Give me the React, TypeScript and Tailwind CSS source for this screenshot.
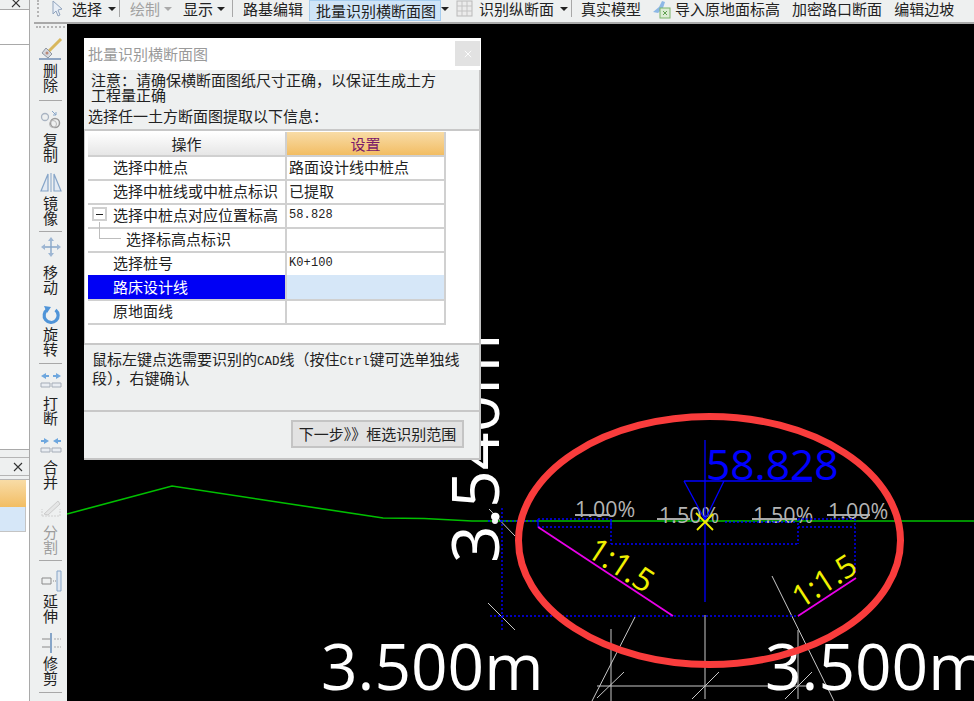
import type { ReactNode } from "react";

const FONT = "font-['Noto_Sans_CJK_SC','Liberation_Sans',sans-serif]";
const MONO = "font-['Liberation_Mono',monospace]";

function Caret({ className = "", gray = false }: { className?: string; gray?: boolean }) {
  return (
    <span
      className={`h-0 w-0 border-x-4 border-t-4 border-x-transparent ${gray ? "border-t-[#aaaaaa]" : "border-t-[#222222]"} ${className}`}
    />
  );
}

function Sep({ className = "" }: { className?: string }) {
  return <span className={`h-[17px] w-px bg-[#a8a8a8] ${className}`} />;
}

function CloseGlyph({ className = "" }: { className?: string }) {
  return (
    <svg viewBox="0 0 10 10" className={className} fill="none" stroke="currentColor" strokeWidth="1.1">
      <path d="M1 1l8 8M9 1l-8 8" />
    </svg>
  );
}

function TopToolbar() {
  return (
    <div className="flex h-6 shrink-0 items-start border-b-2 border-[#a9a9a9] bg-[#eef0f0] text-[15px] leading-[17px] text-[#222222]">
      <div className="flex h-[17px] items-center whitespace-nowrap">
        <span className="ml-[3px] h-[17px] w-[3px] border-l-2 border-dotted border-[#b5b5b5]" />
        <svg viewBox="0 0 11 17" className="ml-3 h-[17px] w-[11px]">
          <path d="M1 1l9 8-4 1 2 5-2 1-2-5-3 3z" fill="#e8eef6" stroke="#8fa3bd" strokeWidth="1" />
        </svg>
        <span className="ml-[9px]">选择</span>
        <Caret className="ml-1.5" />
        <Sep className="ml-[3px]" />
        <span className="ml-2.5 text-[#a2a2a2]">绘制</span>
        <Caret gray className="ml-1" />
        <span className="ml-[11px]">显示</span>
        <Caret className="ml-1" />
        <Sep className="ml-[7px]" />
        <span className="ml-2.5">路基编辑</span>
        <span className="ml-1.5 flex h-[21px] w-[132px] items-center justify-center self-start border border-[#a6cdef] bg-[#cfe4f7] pl-[2px]">
          批量识别横断面图
        </span>
        <Caret />
        <svg viewBox="0 0 17 17" className="ml-[7px] h-[17px] w-[17px]">
          <rect x="1" y="1" width="15" height="15" fill="#ebebeb" stroke="#b9b9b9" />
          <path d="M1 6h15M1 11h15M6 1v15M11 1v15" stroke="#c3c3c3" />
        </svg>
        <span className="ml-1.5">识别纵断面</span>
        <Caret className="ml-1.5" />
        <Sep className="ml-[3px]" />
        <span className="ml-[9px]">真实模型</span>
        <svg viewBox="0 0 20 20" className="ml-2.5 h-5 w-5">
          <path d="M2 13l6-5 3-6 3 1-2 6-5 5z" fill="#8db8e6" />
          <rect x="9" y="9" width="10" height="10" fill="#dcecd4" stroke="#7bb36b" />
          <path d="M12 12l4 4M16 12l-4 4" stroke="#5f9f4f" />
        </svg>
        <span className="ml-1">导入原地面标高</span>
        <span className="ml-3">加密路口断面</span>
        <span className="ml-3">编辑边坡</span>
      </div>
    </div>
  );
}

const STROKE = "#86a5c8";

const icons: Record<string, ReactNode> = {
  brush: (
    <>
      <path d="M9 15L22 2" stroke="#d8b75c" strokeWidth="3" />
      <path d="M7 11l6 6-4 4-6-5z" fill="#d5d8de" stroke="#8f97a3" />
      <circle cx="8" cy="16" r="1.5" fill="#b98a7a" />
      <path d="M0 22h22" stroke="#6f8db3" strokeWidth="1.5" />
    </>
  ),
  copy: (
    <>
      <circle cx="6" cy="9" r="3.5" fill="none" stroke="#a9b4c2" strokeWidth="1.3" />
      <path d="M13 3l4 4M17 4v3h-3" stroke={STROKE} fill="none" />
      <circle cx="16" cy="15" r="4.5" fill="none" stroke="#9a9a9a" strokeWidth="1.5" />
      <circle cx="14" cy="16" r="3.5" fill="none" stroke="#b8b8b8" />
    </>
  ),
  mirror: (
    <>
      <path d="M9 4L2 21h7zM15 4l7 17h-7z" fill="#e3eaf3" stroke={STROKE} strokeWidth="1.2" />
      <path d="M12 3v19" stroke={STROKE} />
    </>
  ),
  move: (
    <>
      <path d="M12 4v16M4 12h16" stroke={STROKE} strokeWidth="1.4" />
      <path d="M12 2l3 4H9zM12 22l3-4H9zM2 12l4-3v6zM22 12l-4-3v6z" fill="#9db6d3" />
    </>
  ),
  rotate: (
    <>
      <path d="M8.5 7.5a7 7 0 1 0 8 0.5" fill="none" stroke="#4f94d8" strokeWidth="3.2" />
      <path d="M5 4l7 1-4 6z" fill="#4f94d8" />
    </>
  ),
  breakLine: (
    <>
      <path d="M2 7l5-3v2h3v2H7v2zM22 7l-5-3v2h-3v2h3v2z" fill="#6ea7de" />
      <path d="M2 14h9v4H2zM13 14h9v4h-9z" fill="#e9edf2" stroke="#a5adb8" />
    </>
  ),
  merge: (
    <>
      <path d="M10 7L5 4v2H2v2h3v2zM14 7l5-3v2h3v2h-3v2z" fill="#6ea7de" />
      <path d="M2 14h9v4H2zM13 14h9v4h-9z" fill="#e9edf2" stroke="#a5adb8" />
    </>
  ),
  split: (
    <>
      <path d="M3 20h18M3 20v-7M21 20v-7" stroke="#c4c4c4" strokeDasharray="2 1" fill="none" />
      <path d="M5 18L19 5l2 3L9 19z" fill="#e2e2e2" stroke="#bdbdbd" />
    </>
  ),
  extend: (
    <>
      <path d="M3 9h9v6H3z" fill="none" stroke="#8a8a8a" />
      <path d="M14 12h3" stroke="#8a8a8a" strokeDasharray="1 1" />
      <path d="M18 2h4v20h-4z" fill="#dfe7f0" stroke={STROKE} />
    </>
  ),
  trim: (
    <>
      <path d="M3 8h9M3 16h9" stroke="#8a8a8a" />
      <path d="M12 2v20" stroke={STROKE} strokeWidth="2" />
      <path d="M15 8h7M15 16h7" stroke="#a9a9a9" strokeDasharray="2 1" />
    </>
  ),
};

function ToolItem({ icon, label, top, gap, gray }: { icon: string; label: string; top: string; gap: string; gray?: boolean }) {
  return (
    <div className={`flex flex-col items-center ${top}`}>
      <svg viewBox="0 0 24 24" className={`h-6 w-6 ${gray ? "opacity-70" : ""}`}>
        {icons[icon]}
      </svg>
      <div className={`w-[15px] text-[15px] leading-[15px] ${gap} ${gray ? "text-[#9c9c9c]" : "text-[#222222]"}`}>{label}</div>
    </div>
  );
}

function SideToolbar() {
  const rule = "mx-auto h-px w-[23px] bg-[#a8a8a8]";
  return (
    <div className="flex w-[33px] shrink-0 flex-col bg-[#eef0f0]">
      <div className="mx-[2px] mt-[2px] h-[2px] border-t-2 border-dotted border-[#b5b5b5]" />
      <ToolItem icon="brush" label="删除" top="mt-[9px]" gap="mt-[1px]" />
      <div className={`mt-[8px] ${rule}`} />
      <ToolItem icon="copy" label="复制" top="mt-[7px]" gap="mt-[0px]" />
      <ToolItem icon="mirror" label="镜像" top="mt-[8px]" gap="mt-[1px]" />
      <div className={`mt-[6px] ${rule}`} />
      <ToolItem icon="move" label="移动" top="mt-[3px]" gap="mt-[5px]" />
      <ToolItem icon="rotate" label="旋转" top="mt-[8px]" gap="mt-[0px]" />
      <div className={`mt-[7px] ${rule}`} />
      <ToolItem icon="breakLine" label="打断" top="mt-[5px]" gap="mt-[2px]" />
      <ToolItem icon="merge" label="合并" top="mt-[9px]" gap="mt-[1px]" />
      <ToolItem icon="split" label="分割" top="mt-[7px]" gap="mt-[4px]" gray />
      <div className={`mt-[6px] ${rule}`} />
      <ToolItem icon="extend" label="延伸" top="mt-[8px]" gap="mt-[0px]" />
      <ToolItem icon="trim" label="修剪" top="mt-[8px]" gap="mt-[0px]" />
      <div className={`mt-[7px] ${rule}`} />
    </div>
  );
}

function LeftPanel() {
  return (
    <div className="flex w-[34px] shrink-0 flex-col bg-[#eef0f0]">
      <div className="flex h-full w-[30px] flex-col border-r border-[#a9a9a9]">
        <div className="flex h-[10px] shrink-0 justify-end overflow-hidden border-b border-[#a9a9a9] pr-2">
          <CloseGlyph className="-mt-[2px] h-2.5 w-2.5 text-[#333333]" />
        </div>
        <div className="h-[35px] shrink-0 border-b border-[#a9a9a9] bg-white" />
        <div className="h-[405px] shrink-0 border-b border-[#a9a9a9] bg-white" />
        <div className="mt-[7px] flex h-[19px] shrink-0 items-center justify-end border-y border-[#b5b5b5] pr-[6px]">
          <CloseGlyph className="h-2.5 w-2.5 text-[#333333]" />
        </div>
        <div className="mt-[3px] flex-1 border-t border-[#b5b5b5] bg-white">
          <div className="h-[27px] w-[26px] bg-gradient-to-b from-[#f8dca6] to-[#f2bd62]" />
          <div className="h-[25px] w-[26px] border-r border-b border-[#c4c4c4] bg-[#d6e7f8]" />
        </div>
      </div>
    </div>
  );
}

const rows = [
  { op: "选择中桩点", value: "路面设计线中桩点" },
  { op: "选择中桩线或中桩点标识", value: "已提取" },
  { op: "选择中桩点对应位置标高", value: "58.828", mono: true, tree: true },
  { op: "选择标高点标识", value: "", child: true },
  { op: "选择桩号", value: "K0+100", mono: true },
  { op: "路床设计线", value: "", active: true },
  { op: "原地面线", value: "" },
];

function StepTable() {
  const line = "border-r-2 border-b-2 border-[#d0d0d0]";
  return (
    <div className="ml-[3px] mt-[1px] w-[358px] text-[15px] text-[#222222]">
      <div className="grid h-[23px] grid-cols-[199px_159px] text-center leading-[23px]">
        <div className={`${line} bg-gradient-to-b from-white to-[#e6e6e6]`}>操作</div>
        <div className={`${line} bg-gradient-to-b from-[#f8dca6] to-[#f2bd62] text-[#7a1a6a]`}>设置</div>
      </div>
      {rows.map((r) => (
        <div key={r.op} className="grid h-[24px] grid-cols-[199px_159px] leading-[24px]">
          <div
            className={`relative whitespace-nowrap ${line} ${r.child ? "pl-[38px]" : "pl-[25px]"} ${r.active ? "bg-[#0000f5] text-white" : ""}`}
          >
            {r.tree && (
              <span className="absolute left-[4px] top-[4px] flex h-[14px] w-[15px] items-center justify-center border-2 border-[#d0d0d0] bg-white">
                <span className="h-px w-[7px] bg-[#222222]" />
              </span>
            )}
            {r.child && (
              <span className="absolute left-[11px] -top-[5px] h-[17px] w-[22px] border-b border-l border-[#bdbdbd]" />
            )}
            {r.op}
          </div>
          <div className={`pl-[2px] ${line} ${r.active ? "bg-[#d6e7f8]" : ""} ${r.mono ? `${MONO} text-[12px] tracking-[0.1px]` : ""}`}>
            {r.value}
          </div>
        </div>
      ))}
    </div>
  );
}

function Dialog() {
  const latin = `${MONO} text-[12.5px] leading-none`;
  return (
    <div className="absolute left-[17px] top-[14px] flex h-[422px] w-[397px] flex-col border-r-2 border-b-2 border-[#c4c4c4] bg-[#eef0f0] text-[15px] text-[#222222]">
      <div className="-mr-[2px] flex h-[32px] shrink-0 items-start justify-between bg-white pl-1 pr-[1px]">
        <span className="mt-[6px] leading-5 text-[#9a9a9a]">批量识别横断面图</span>
        <span className="mt-[3px] flex h-[25px] w-[25px] items-center justify-center bg-[#e2e2e2] text-white">
          <CloseGlyph className="h-2 w-2" />
        </span>
      </div>
      <p className="ml-[7px] mt-[2px] leading-[15px]">
        注意：请确保横断面图纸尺寸正确，以保证生成土方
        <br />
        工程量正确
      </p>
      <p className="ml-[4px] mt-[5px] leading-[18px]">选择任一土方断面图提取以下信息：</p>
      <div className="mt-[4px] h-[216px] shrink-0 border-y-2 border-l border-[#c8c8c8] bg-white">
        <StepTable />
      </div>
      <p className="h-[65px] shrink-0 whitespace-nowrap px-2 pt-[5px] leading-[17px]">
        鼠标左键点选需要识别的<span className={latin}>CAD</span>线（按住<span className={latin}>Ctrl</span>键可选单独线
        <br />
        段），右键确认
      </p>
      <div className="flex-1 border-t-2 border-[#c8c8c8]">
        <button className="ml-[207px] mt-[8px] flex h-[28px] w-[173px] items-center justify-center whitespace-nowrap border-2 border-[#c4c4c4] bg-[#e2e2e2]">
          下一步》》框选识别范围
        </button>
      </div>
    </div>
  );
}

const whiteLines = [
  [772, 576, 834, 701],
  [635, 617, 592, 701],
  [611, 629, 611, 701],
  [705, 615, 705, 699],
  [798, 630, 798, 699],
  [597, 686, 810, 686],
  [597, 698, 624, 672],
  [692, 699, 719, 672],
  [785, 699, 812, 672],
  [488, 603, 515, 630],
  [489, 509, 515, 536],
];

const underlines = [
  [575, 515, 610, 515],
  [657, 519, 690, 519],
  [752, 519, 797, 519],
  [827, 515, 870, 515],
];

const dashed = [
  [538, 519, 610, 519],
  [538, 527, 610, 527],
  [611, 519, 611, 544],
  [611, 544, 798, 544],
  [798, 519, 798, 544],
  [798, 519, 855, 519],
  [798, 527, 855, 527],
  [855, 519, 855, 575],
  [490, 616, 799, 616],
  [502, 508, 502, 630],
  [488, 521, 540, 521],
  [725, 522, 795, 522],
];

const slopeText = "font-['Open_Sans',sans-serif]";

function Drawing() {
  return (
    <svg viewBox="67 24 907 677" className="absolute inset-0 h-full w-full">
      <polyline points="67,514 172,486 383,518 424,518.5 472,521 974,521" fill="none" stroke="#00c000" strokeWidth="1.6" />
      {underlines.map(([x1, y1, x2, y2]) => (
        <line key={x1} x1={x1} y1={y1} x2={x2} y2={y2} stroke="#e0e0e0" strokeWidth="1.4" />
      ))}
      {[
        [575, 517, "1.00%"],
        [659, 523, "1.50%"],
        [753, 523, "1.50%"],
        [828, 519, "1.00%"],
      ].map(([x, y, t]) => (
        <text key={`${x}`} x={x} y={y} fill="#b4b4b4" fontSize="21.5" className={slopeText}>
          {t}
        </text>
      ))}
      {whiteLines.map(([x1, y1, x2, y2], i) => (
        <line key={i} x1={x1} y1={y1} x2={x2} y2={y2} stroke="#c8c8c8" />
      ))}
      {dashed.map(([x1, y1, x2, y2], i) => (
        <line key={i} x1={x1} y1={y1} x2={x2} y2={y2} stroke="#0000ff" strokeWidth="1.4" strokeDasharray="2 2" />
      ))}
      <path d="M705 440V602M684 481H812M684 481L705 520L724 481M538 519V527M611 519V528" fill="none" stroke="#0000ff" strokeWidth="1.3" />
      <text x="706" y="480" fill="#0000ff" fontSize="42.5" className={slopeText}>
        58.828
      </text>
      <path d="M538 527L673 616M798 616L856 578" stroke="#e800e8" strokeWidth="1.8" fill="none" />
      <path d="M696 513L713 530M697 530L713 514" stroke="#f0f000" strokeWidth="1.8" />
      <circle cx="495" cy="521" r="3" fill="#f2f2f2" />
      <text x="0" y="0" transform="translate(585 555) rotate(33)" fill="#f0f000" fontSize="32" className={slopeText}>
        1:1.5
      </text>
      <text x="0" y="0" transform="translate(801 609) rotate(-33)" fill="#f0f000" fontSize="31" className={slopeText}>
        1:1.5
      </text>
      <text x="321" y="690" fill="#ffffff" fontSize="64" className={slopeText}>
        3.500m
      </text>
      <text x="765" y="690" fill="#ffffff" fontSize="64" className={slopeText}>
        3.500m
      </text>
      <text x="0" y="0" transform="translate(499 563) rotate(-90)" fill="#ffffff" fontSize="66" className={slopeText}>
        3.540m
      </text>
      <ellipse cx="709.5" cy="540.5" rx="191" ry="124" fill="none" stroke="#f93c3c" strokeWidth="7" />
    </svg>
  );
}

export default function App() {
  return (
    <div className={`flex h-[701px] w-[974px] overflow-hidden ${FONT}`}>
      <LeftPanel />
      <div className="flex min-w-0 flex-1 flex-col">
        <TopToolbar />
        <div className="flex min-h-0 flex-1">
          <SideToolbar />
          <div className="relative flex-1 bg-black">
            <Drawing />
            <Dialog />
          </div>
        </div>
      </div>
    </div>
  );
}
